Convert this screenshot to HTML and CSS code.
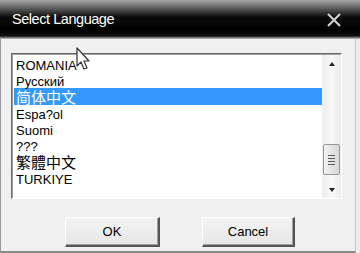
FILE: index.html
```html
<!DOCTYPE html>
<html lang="en">
<head>
<meta charset="UTF-8" />
<meta name="viewport" content="width=device-width, initial-scale=1" />
<title>Select Language</title>
<link rel="stylesheet" href="styles.css">
</head>
<body>
<div class="window">
  <div class="titlebar">
    <span class="title">Select Language</span>
    <svg class="close" width="16" height="16" viewBox="0 0 16 16">
      <path d="M2 2 L14 14 M14 2 L2 14" stroke="#cccccc" stroke-width="2.2" fill="none" />
    </svg>
  </div>
  <div class="body">
    <div class="listbox">
      <ul class="items">
        <li>ROMANIA</li>
        <li>Русский</li>
        <li class="cjk selected">简体中文</li>
        <li>Espa?ol</li>
        <li>Suomi</li>
        <li>???</li>
        <li class="cjk tc">繁體中文</li>
        <li>TURKIYE</li>
      </ul>
      <div class="scrollbar">
        <div class="arrow up"></div>
        <div class="track">
          <div class="thumb">
            <span></span><span></span><span></span><span></span>
          </div>
        </div>
        <div class="arrow down"></div>
      </div>
    </div>
    <div class="buttons">
      <button class="ok">OK</button>
      <button class="cancel">Cancel</button>
    </div>
  </div>
  <svg class="cursor" width="14" height="24" viewBox="0 0 14 24">
    <path d="M1 1 L1 19 L5 15 L8 22 L11 21 L8 14 L13 14 Z" fill="#fff" stroke="#333" stroke-width="1.2" stroke-linejoin="round" />
  </svg>
</div>
</body>
</html>
```

FILE: styles.css
```css
html, body {
  margin: 0;
  padding: 0;
  background: #ececec;
}
body {
  width: 360px;
  height: 253px;
  overflow: hidden;
  font-family: 'Liberation Sans', Arial, sans-serif;
}
.window {
  position: relative;
  width: 360px;
  height: 253px;
  display: flex;
  flex-direction: column;
}
.titlebar {
  height: 39px;
  flex: none;
  display: flex;
  align-items: center;
  justify-content: space-between;
  padding: 0 18px 0 12px;
  box-sizing: border-box;
  background: linear-gradient(#a6a6a6 0, #7a7a7a 5px, #3a3a3a 12px, #0c0c0c 17px, #000 30px, #111 36px, #8c8c8c 38px, #d0d0d0 39px);
}
.title {
  color: #fff;
  font-size: 14.5px;
  letter-spacing: -0.45px;
  margin-top: -1px;
}
.body {
  flex: 1;
  background: #f0f0f0;
  border-left: 1px solid #9a9a9a;
  border-right: 1px solid #c4c4c4;
  border-bottom: 2px solid #8a8a8a;
  margin-right: 4px;
  padding: 14px 0 0 10px;
  box-sizing: border-box;
}
.listbox {
  width: 331px;
  height: 146px;
  box-sizing: border-box;
  display: flex;
  background: #fff;
  border-top: 1px solid #6a6a6a;
  border-left: 1px solid #6a6a6a;
  border-right: 1px solid #fff;
  border-bottom: 1px solid #fff;
  box-shadow: inset 1px 1px 0 #a0a0a0;
  padding: 2px 0 0 2px;
}
.items {
  list-style: none;
  margin: 0;
  padding: 0;
  flex: 1;
  font-size: 13px;
  color: #000;
}
.items li {
  height: 14px;
  line-height: 16px;
  padding: 2px 0 0 2px;
}
.items li.cjk {
  height: 17px;
  line-height: 17px;
  padding-top: 0;
  font-family: 'Noto Sans CJK SC', sans-serif;
  font-size: 15px;
}
.items li.tc {
  font-family: 'Noto Sans CJK TC', sans-serif;
}
.items li.selected {
  background: #3399ff;
  color: #fff;
}
.scrollbar {
  width: 19px;
  margin-top: -1px;
  flex: none;
  display: flex;
  flex-direction: column;
  background: linear-gradient(90deg, #ececec, #f8f8f8 50%, #ececec);
}
.arrow {
  height: 17px;
  display: flex;
  align-items: center;
  justify-content: center;
}
.arrow::before {
  content: '';
  border-left: 3.5px solid transparent;
  border-right: 3.5px solid transparent;
}
.arrow.up::before {
  border-bottom: 4px solid #222;
}
.arrow.down::before {
  border-top: 4px solid #222;
}
.track {
  flex: 1;
  display: flex;
  flex-direction: column;
  justify-content: flex-end;
  padding: 0 1px 6px 1px;
}
.thumb {
  height: 31px;
  box-sizing: border-box;
  border: 1px solid #979797;
  border-radius: 2px;
  background: linear-gradient(90deg, #f2f2f2, #e4e4e4 50%, #d8d8d8);
  display: flex;
  flex-direction: column;
  align-items: center;
  justify-content: center;
  gap: 2px;
}
.thumb span {
  width: 7px;
  height: 1px;
  background: #5a5a5a;
}
.buttons {
  display: flex;
  gap: 42px;
  margin-top: 18px;
  padding-left: 54px;
}
button {
  height: 30px;
  box-sizing: border-box;
  font-family: 'Liberation Sans', Arial, sans-serif;
  font-size: 13px;
  color: #000;
  background: linear-gradient(#f4f4f4, #e6e6e6);
  border-top: 1px solid #fff;
  border-left: 1px solid #fff;
  border-right: 2px solid #555;
  border-bottom: 2px solid #555;
  box-shadow: inset -1px -1px 0 #a0a0a0;
  padding: 0;
}
.ok {
  width: 95px;
}
.cancel {
  width: 93px;
}
.cursor {
  position: absolute;
  left: 76px;
  top: 47px;
}
```
